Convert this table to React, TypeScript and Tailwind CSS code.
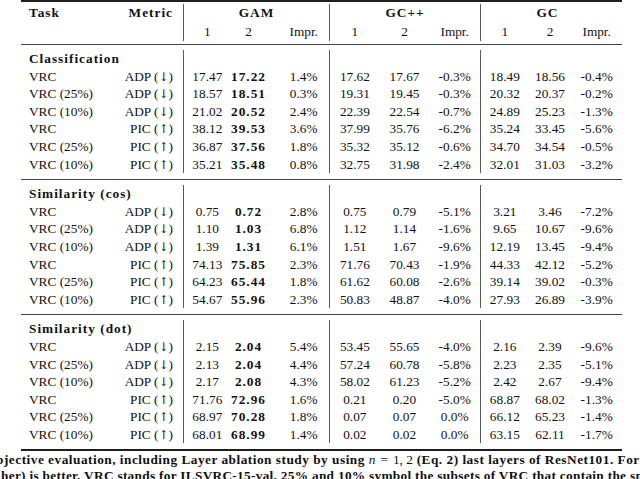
import React from "react";

type Row = [string, string, string, string, string, string, string, string, string, string, string];

const sections: { title: string; rows: Row[] }[] = [
  {
    title: "Classification",
    rows: [
      ["VRC", "ADP|↓", "17.47", "17.22", "1.4%", "17.62", "17.67", "-0.3%", "18.49", "18.56", "-0.4%"],
      ["VRC (25%)", "ADP|↓", "18.57", "18.51", "0.3%", "19.31", "19.45", "-0.3%", "20.32", "20.37", "-0.2%"],
      ["VRC (10%)", "ADP|↓", "21.02", "20.52", "2.4%", "22.39", "22.54", "-0.7%", "24.89", "25.23", "-1.3%"],
      ["VRC", "PIC|↑", "38.12", "39.53", "3.6%", "37.99", "35.76", "-6.2%", "35.24", "33.45", "-5.6%"],
      ["VRC (25%)", "PIC|↑", "36.87", "37.56", "1.8%", "35.32", "35.12", "-0.6%", "34.70", "34.54", "-0.5%"],
      ["VRC (10%)", "PIC|↑", "35.21", "35.48", "0.8%", "32.75", "31.98", "-2.4%", "32.01", "31.03", "-3.2%"],
    ],
  },
  {
    title: "Similarity (cos)",
    rows: [
      ["VRC", "ADP|↓", "0.75", "0.72", "2.8%", "0.75", "0.79", "-5.1%", "3.21", "3.46", "-7.2%"],
      ["VRC (25%)", "ADP|↓", "1.10", "1.03", "6.8%", "1.12", "1.14", "-1.6%", "9.65", "10.67", "-9.6%"],
      ["VRC (10%)", "ADP|↓", "1.39", "1.31", "6.1%", "1.51", "1.67", "-9.6%", "12.19", "13.45", "-9.4%"],
      ["VRC", "PIC|↑", "74.13", "75.85", "2.3%", "71.76", "70.43", "-1.9%", "44.33", "42.12", "-5.2%"],
      ["VRC (25%)", "PIC|↑", "64.23", "65.44", "1.8%", "61.62", "60.08", "-2.6%", "39.14", "39.02", "-0.3%"],
      ["VRC (10%)", "PIC|↑", "54.67", "55.96", "2.3%", "50.83", "48.87", "-4.0%", "27.93", "26.89", "-3.9%"],
    ],
  },
  {
    title: "Similarity (dot)",
    rows: [
      ["VRC", "ADP|↓", "2.15", "2.04", "5.4%", "53.45", "55.65", "-4.0%", "2.16", "2.39", "-9.6%"],
      ["VRC (25%)", "ADP|↓", "2.13", "2.04", "4.4%", "57.24", "60.78", "-5.8%", "2.23", "2.35", "-5.1%"],
      ["VRC (10%)", "ADP|↓", "2.17", "2.08", "4.3%", "58.02", "61.23", "-5.2%", "2.42", "2.67", "-9.4%"],
      ["VRC", "PIC|↑", "71.76", "72.96", "1.6%", "0.21", "0.20", "-5.0%", "68.87", "68.02", "-1.3%"],
      ["VRC (25%)", "PIC|↑", "68.97", "70.28", "1.8%", "0.07", "0.07", "0.0%", "66.12", "65.23", "-1.4%"],
      ["VRC (10%)", "PIC|↑", "68.01", "68.99", "1.4%", "0.02", "0.02", "0.0%", "63.15", "62.11", "-1.7%"],
    ],
  },
];

const bold = "font-bold tracking-[1px]";

const Metric = ({ value }: { value: string }) => {
  const [name, arrow] = value.split("|");
  return (
    <>
      {name} (<span className="[font-family:'DejaVu_Serif',serif] text-[12px]">{arrow}</span>)
    </>
  );
};

// three cells of one method block, widths tuned per block
const GamCells = ({ a, b, c, head }: { a: string; b: string; c: string; head?: boolean }) => (
  <div className="flex w-[146px] border-l border-[#5a5a5a]">
    <div className="w-[47px] text-center">{a}</div>
    <div className={`w-[36px] text-center ${head ? "" : bold}`}>{b}</div>
    <div className="w-[63px] pl-[12px] text-center">{c}</div>
  </div>
);

const GcppCells = ({ a, b, c }: { a: string; b: string; c: string }) => (
  <div className="flex w-[151px] border-l border-[#5a5a5a]">
    <div className="w-[50px] text-center">{a}</div>
    <div className="w-[50px] text-center">{b}</div>
    <div className="w-[51px] text-center">{c}</div>
  </div>
);

const GcCells = ({ a, b, c }: { a: string; b: string; c: string }) => (
  <div className="flex w-[142px] border-l border-[#5a5a5a]">
    <div className="w-[48px] text-center">{a}</div>
    <div className="w-[43px] text-center">{b}</div>
    <div className="w-[51px] text-center">{c}</div>
  </div>
);

const Section = ({ title, rows }: { title: string; rows: Row[] }) => (
  <div className="pt-[5px] pb-[6px]">
    <div className="flex h-[17.6px] items-center">
      <div className={`w-[162px] pl-[8px] ${bold}`}>{title}</div>
      <div className="h-full w-[146px] border-l border-[#5a5a5a]" />
      <div className="h-full w-[151px] border-l border-[#5a5a5a]" />
      <div className="h-full w-[142px] border-l border-[#5a5a5a]" />
    </div>
    {rows.map((r, i) => (
      <div key={i} className="flex h-[17.6px] items-stretch leading-[17.6px]">
        <div className="w-[89px] pl-[8px]">{r[0]}</div>
        <div className="w-[73px] pr-[10px] text-right">
          <Metric value={r[1]} />
        </div>
        <GamCells a={r[2]} b={r[3]} c={r[4]} />
        <GcppCells a={r[5]} b={r[6]} c={r[7]} />
        <GcCells a={r[8]} b={r[9]} c={r[10]} />
      </div>
    ))}
  </div>
);

export default function App() {
  return (
    <div className="h-[479px] w-[640px] overflow-hidden bg-white text-[13.3px] text-[#111111] [font-family:'Liberation_Serif',serif]">
      <div className="ml-[21px] w-[601px]">
        <div className="h-[2px] bg-[#1e1e1e]" />
        <div className="pt-[2px] pb-[3px]">
          <div className="flex h-[18.5px] leading-[18.5px]">
            <div className={`w-[89px] pl-[8px] ${bold}`}>Task</div>
            <div className={`w-[73px] pr-[10px] text-right ${bold}`}>Metric</div>
            <div className={`w-[146px] border-l border-[#5a5a5a] text-center ${bold}`}>GAM</div>
            <div className={`w-[151px] border-l border-[#5a5a5a] text-center ${bold}`}>GC++</div>
            <div className={`w-[142px] border-l border-[#5a5a5a] pr-[8px] text-center ${bold}`}>GC</div>
          </div>
          <div className="flex h-[18.5px] leading-[18.5px]">
            <div className="w-[162px]" />
            <GamCells a="1" b="2" c="Impr." head />
            <GcppCells a="1" b="2" c="Impr." />
            <GcCells a="1" b="2" c="Impr." />
          </div>
        </div>
        {sections.map((s) => (
          <div key={s.title}>
            <div className="h-px bg-[#444444]" />
            <Section title={s.title} rows={s.rows} />
          </div>
        ))}
        <div className="h-[1.5px] bg-[#1e1e1e]" />
      </div>
      <div className="mt-[1px] whitespace-nowrap font-bold leading-[16.5px]">
        <div className="-ml-[4px] tracking-[0.5px]">
          bjective evaluation, including Layer ablation study by using{" "}
          <span className="font-normal tracking-normal">
            <i>n</i>
            <span className="mx-[5px]">=</span>1, 2
          </span>{" "}
          (Eq. 2) last layers of ResNet101. For
        </div>
        <div className="ml-[1px] tracking-[0.3px]">
          her) is better. VRC stands for ILSVRC-15-val. 25% and 10% symbol the subsets of VRC that contain the small
        </div>
      </div>
    </div>
  );
}
